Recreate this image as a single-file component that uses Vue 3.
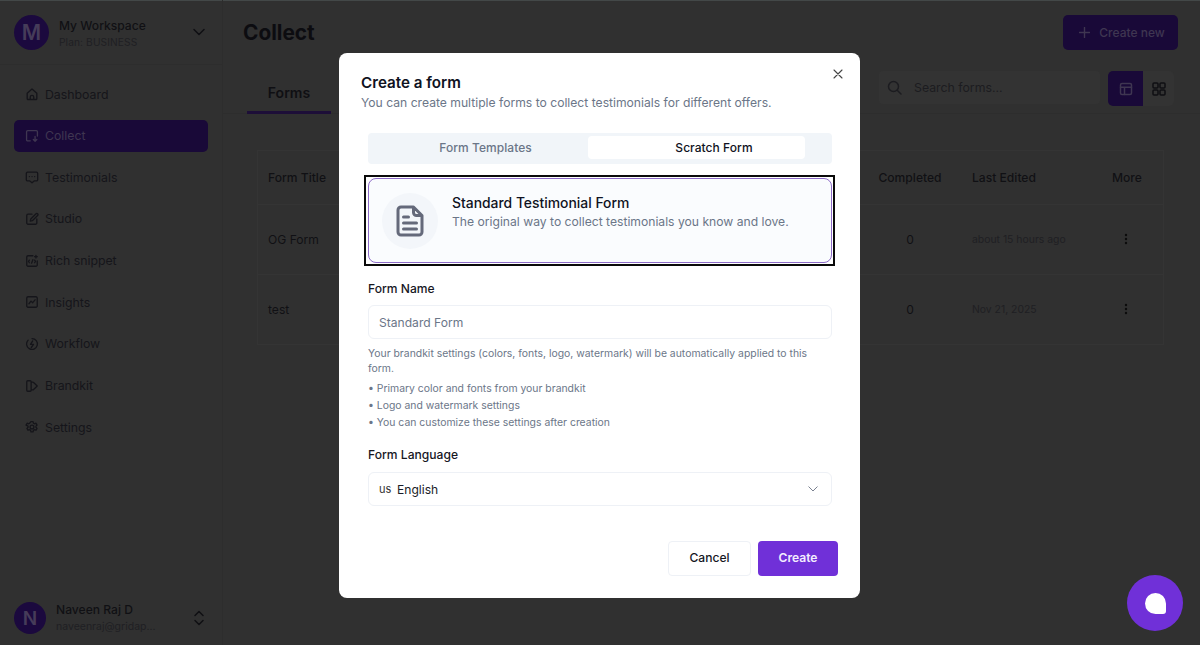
<script setup>
const nav = [
  { label: 'Dashboard', d: 'M2.5 7.2 8 2.2l5.500 5v6.100a1 1 0 0 1-1 1h-9a1 1 0 0 1-1-1zM6 14.200v-2.700a2 2 0 0 1 4 0v2.700' },
  { label: 'Collect', active: true, d: 'M6 13.500H3a1.200 1.200 0 0 1-1.200-1.200V3A1.200 1.200 0 0 1 3 1.800h10A1.200 1.200 0 0 1 14.200 3v5M11.500 8.500v5.500M9.500 12l2 2 2-2' },
  { label: 'Testimonials', d: 'M3 2.500h10a1.500 1.500 0 0 1 1.500 1.500v7a1.500 1.500 0 0 1-1.500 1.500h-2.500L8 14.700 5.500 12.500H3A1.500 1.500 0 0 1 1.500 11V4A1.500 1.500 0 0 1 3 2.500zM5 7.500h.1M8 7.500h.1M11 7.500h.1' },
  { label: 'Studio', d: 'M8 2.500H3.500A1.500 1.500 0 0 0 2 4v8.500A1.500 1.500 0 0 0 3.500 14H12a1.500 1.500 0 0 0 1.500-1.500V8M6 10.500l.6-2.400 6-6a1.200 1.200 0 0 1 1.800 1.800l-6 6z' },
  { label: 'Rich snippet', d: 'M9 2H3.500A1.500 1.500 0 0 0 2 3.500v9A1.500 1.500 0 0 0 3.500 14h9a1.500 1.500 0 0 0 1.500-1.500V8M5 7l-1 1.500L5 10M7.500 10.500l1.500-4M11 7l1 1.500L11 10M12.500 1.500v3M11 3h3' },
  { label: 'Insights', d: 'M3.500 2h9A1.500 1.500 0 0 1 14 3.500v9a1.500 1.500 0 0 1-1.500 1.500h-9A1.500 1.500 0 0 1 2 12.500v-9A1.500 1.500 0 0 1 3.500 2zM4.500 10l2.300-3 2 1.800L11.500 5.500' },
  { label: 'Workflow', d: 'M8 1.800a6.200 6.200 0 1 1-4.400 1.800M1.900 7.200a6.200 6.200 0 0 1 .5-1.700M8.800 4.500 6.300 8.500h3.400l-2.500 3.500' },
  { label: 'Brandkit', d: 'M2 3.200A1.200 1.200 0 0 1 3.200 2h2.600A1.200 1.200 0 0 1 7 3.200v9.600A1.200 1.200 0 0 1 5.800 14H3.200A1.200 1.200 0 0 1 2 12.800zM7 3.500h1.800a1.200 1.200 0 0 1 1 .6L14 8l-4.200 4a1.200 1.200 0 0 1-1 .5H7' },
  { label: 'Settings', d: 'M6.800 1.800h2.400l.4 1.800 1.300.7 1.700-.6 1.200 2.100-1.300 1.200v1.400l1.300 1.200-1.200 2.100-1.700-.6-1.300.7-.4 1.800H6.800l-.4-1.800-1.300-.7-1.700.6-1.200-2.100 1.300-1.200V7L1.200 5.800l1.200-2.100 1.700.6 1.300-.7zM8 5.800a2.200 2.200 0 1 0 0 4.400 2.200 2.200 0 0 0 0-4.400z' },
]
const rows = [
  { title: 'OG Form', edited: 'about 15 hours ago' },
  { title: 'test', edited: 'Nov 21, 2025' },
]
const bullets = [
  'Primary color and fonts from your brandkit',
  'Logo and watermark settings',
  'You can customize these settings after creation',
]
</script>

<template>
  <div class="page">
    <aside class="sidebar">
      <div class="workspace">
        <div class="avatar large">M</div>
        <div class="who">
          <div class="name">My Workspace</div>
          <div class="plan">Plan: BUSINESS</div>
        </div>
        <svg class="chev" width="14" height="14" viewBox="0 0 14 14"><path d="M2 4.500 7 9.500l5-5" /></svg>
      </div>
      <nav class="nav">
        <a v-for="item in nav" :key="item.label" class="nav-item" :class="{ active: item.active }">
          <svg width="14" height="14" viewBox="0 0 16 16"><path :d="item.d" /></svg>
          <span>{{ item.label }}</span>
        </a>
      </nav>
      <div class="user">
        <div class="avatar small">N</div>
        <div class="who">
          <div class="uname">Naveen Raj D</div>
          <div class="email">naveenraj@gridap...</div>
        </div>
        <svg class="chev" width="14" height="18" viewBox="0 0 14 18"><path d="M3 6.500 7 2.500l4 4M3 11.500l4 4 4-4" /></svg>
      </div>
    </aside>

    <main class="main">
      <header class="top">
        <h1>Collect</h1>
        <button class="create-new">
          <svg width="11" height="11" viewBox="0 0 12 12"><path d="M6 .5v11M.5 6h11" /></svg>
          Create new
        </button>
      </header>
      <div class="tabbar">
        <div class="tab">Forms</div>
        <div class="tools">
          <div class="search">
            <svg width="15" height="15" viewBox="0 0 15 15"><circle cx="6.500" cy="6.500" r="5" /><path d="m10.500 10.500 3.500 3.500" /></svg>
            <span>Search forms...</span>
          </div>
          <div class="views">
            <div class="view on">
              <svg width="14" height="14" viewBox="0 0 14 14"><rect x="1.500" y="1.500" width="11" height="11" rx="1.500" /><path d="M1.500 5.200h11M5.500 5.200v7.300" /></svg>
            </div>
            <div class="view">
              <svg width="14" height="14" viewBox="0 0 14 14"><rect x="1" y="1" width="5" height="5" rx="1" /><rect x="8" y="1" width="5" height="5" rx="1" /><rect x="1" y="8" width="5" height="5" rx="1" /><rect x="8" y="8" width="5" height="5" rx="1" /></svg>
            </div>
          </div>
        </div>
      </div>
      <section class="table">
        <div class="row head">
          <div class="c-title">Form Title</div>
          <div class="c-num">Completed</div>
          <div class="c-edit">Last Edited</div>
          <div class="c-more">More</div>
        </div>
        <div v-for="r in rows" :key="r.title" class="row body">
          <div class="c-title">{{ r.title }}</div>
          <div class="c-num">0</div>
          <div class="c-edit date">{{ r.edited }}</div>
          <div class="c-more">
            <svg width="4" height="12" viewBox="0 0 4 12" class="kebab"><circle cx="2" cy="2" r="1.200" /><circle cx="2" cy="6" r="1.200" /><circle cx="2" cy="10" r="1.200" /></svg>
          </div>
        </div>
      </section>
    </main>

    <div class="modal">
      <svg class="close" width="10" height="10" viewBox="0 0 10 10"><path d="m1 1 8 8M9 1 1 9" /></svg>
      <h2>Create a form</h2>
      <p class="sub">You can create multiple forms to collect testimonials for different offers.</p>
      <div class="content">
        <div class="switch">
          <div class="sw-item left">Form Templates</div>
          <div class="sw-item picked">Scratch Form</div>
        </div>
        <div class="card-focus">
          <div class="card">
            <div class="doc">
              <svg width="30" height="32" viewBox="0 0 30 32"><path d="M18.500 2H6a3 3 0 0 0-3 3v22a3 3 0 0 0 3 3h18a3 3 0 0 0 3-3V10.500zM18.500 2v5.500a3 3 0 0 0 3 3H27M8.500 12h5M8.500 18h13M8.500 24h13" /></svg>
            </div>
            <div class="card-text">
              <div class="card-title">Standard Testimonial Form</div>
              <div class="card-desc">The original way to collect testimonials you know and love.</div>
            </div>
          </div>
        </div>
        <label class="field-label first">Form Name</label>
        <div class="input name-input placeholder">Standard Form</div>
        <p class="help">Your brandkit settings (colors, fonts, logo, watermark) will be automatically applied to this form.</p>
        <ul class="bullets">
          <li v-for="b in bullets" :key="b">• {{ b }}</li>
        </ul>
        <label class="field-label second">Form Language</label>
        <div class="input select">
          <span class="flag">US</span>
          <span class="lang">English</span>
          <svg width="10" height="6" viewBox="0 0 10 6"><path d="m.8.8 4.200 4.200L9.200.8" /></svg>
        </div>
      </div>
      <div class="actions">
        <button class="cancel">Cancel</button>
        <button class="create">Create</button>
      </div>
    </div>

    <div class="bubble"><span></span></div>
  </div>
</template>

<style>
html, body { margin: 0; background: #303030; overflow: hidden; }
</style>

<style scoped>
* { box-sizing: border-box; }
.page {
  width: 1200px; height: 645px; position: relative; display: flex; overflow: hidden;
  background: #303030; color: #141419;
  font-family: Inter, "Liberation Sans", sans-serif;
  box-shadow: inset 0 1px 0 #434848;
}
svg { fill: none; stroke: currentColor; stroke-width: 1.500; stroke-linecap: round; stroke-linejoin: round; flex: none; }

.sidebar { width: 223px; height: 645px; flex: none; display: flex; flex-direction: column; border-right: 1px solid #2d2d2d; }
.workspace { height: 65px; flex: none; display: flex; align-items: center; padding: 0 16px 0 14px; border-bottom: 1px solid #2d2d2d; }
.avatar { border-radius: 50%; background: #1b093e; color: #463c59; display: flex; align-items: center; justify-content: center; font-weight: 600; flex: none; }
.avatar.large { width: 35px; height: 35px; font-size: 21px; }
.avatar.small { width: 32px; height: 32px; font-size: 19px; }
.who { flex: 1; min-width: 0; }
.workspace .who { margin-left: 10px; padding-top: 3px; }
.name { font-size: 12.100px; font-weight: 500; line-height: 16px; color: #101014; }
.plan { font-size: 10.200px; line-height: 16px; color: #1f1f23; letter-spacing: .1px; }
.chev { color: #0f0f13; }

.nav { padding: 13px 14px 0; display: flex; flex-direction: column; gap: 9.670px; }
.nav-item { height: 32px; width: 194px; border-radius: 5px; display: flex; align-items: center; gap: 6px; padding-left: 11px; font-size: 12.300px; color: #15151a; }
.nav-item.active { background: #190938; color: #3f3651; }

.user { margin-top: auto; height: 54px; flex: none; display: flex; align-items: center; padding: 0 16px 0 14px; }
.user .who { margin-left: 10px; }
.uname { font-size: 12.100px; font-weight: 500; line-height: 17px; color: #101014; }
.email { font-size: 10.500px; line-height: 17px; color: #1f1f23; }

.main { flex: 1; min-width: 0; height: 645px; }
.top { height: 65px; display: flex; align-items: center; justify-content: space-between; padding: 0 22px 0 20px; }
.top h1 { margin: 0 0 1px; font-size: 20.800px; font-weight: 700; color: #0c0c10; }
.create-new { width: 115px; height: 35px; border: 0; border-radius: 5px; background: #190938; color: #3f3651; font: 500 12px Inter, sans-serif; display: flex; align-items: center; justify-content: center; gap: 9px; padding: 0 0 0 3px; }

.tabbar { height: 49px; display: flex; justify-content: space-between; align-items: flex-start; border-bottom: 1px solid #2d2d2d; padding: 0 26px 0 24px; }
.tab { width: 84px; height: 49px; border-bottom: 3px solid #1d0e38; font-size: 14px; font-weight: 600; color: #0f0f13; text-align: center; line-height: 56px; }
.tools { display: flex; gap: 8px; margin-top: 6px; }
.search { width: 221px; height: 33px; background: #333333; border-radius: 4px; display: flex; align-items: center; gap: 12px; padding-left: 8px; font-size: 12.300px; color: #1c1c20; }
.views { display: flex; background: #333333; border-radius: 5px; }
.view { width: 31px; height: 35px; display: flex; align-items: center; justify-content: center; color: #0f0f13; }
.view.on { width: 35px; background: #190938; color: #3f3651; border-radius: 5px 0 0 5px; }

.table { margin: 36px 36px 0 34px; border: 1px solid #343434; }
.row { display: grid; grid-template-columns: 1fr 84px 149px 63px; align-items: center; font-size: 12.100px; color: #101014; }
.row.head { height: 54px; font-weight: 500; border-bottom: 1px solid #343434; }
.row.body { height: 69.500px; border-bottom: 1px solid #343434; }
.row.body:last-child { border-bottom: 0; }
.c-title { padding-left: 10px; }
.c-num { text-align: center; padding-left: 2px; }
.c-edit { padding-left: 21px; }
.c-more { padding-left: 12px; }
.row.body .c-more { padding-left: 24px; display: flex; }
.date { font-size: 10.400px; color: #1f1f23; }
.kebab { fill: #0c0c0c; stroke: none; }

.modal {
  position: absolute; left: 339px; top: 53px; width: 521px; height: 545px;
  background: #fff; border-radius: 8px; padding: 20px 22px 0; color: #0f1222;
}
.close { position: absolute; right: 17px; top: 16px; color: #444; stroke-width: 1.100; }
.modal h2 { margin: 0; font-size: 15.200px; line-height: 19px; font-weight: 600; color: #0f1222; }
.sub { margin: 2px 0 0; font-size: 12.150px; line-height: 18px; color: #6b7688; }
.content { padding: 0 6px 0 7px; margin-top: 21px; }
.switch { height: 31px; background: #f1f5f9; border-radius: 4px; display: flex; padding: 3px; font-size: 12px; }
.sw-item { flex: 0 0 217px; height: 23px; display: flex; align-items: center; justify-content: center; color: #6b7688; font-weight: 500; letter-spacing: .05px; }
.sw-item.left { padding-left: 12px; }
.sw-item.picked { background: #fff; border-radius: 4px; color: #0f1222; padding-left: 35px; }

.card-focus { margin-top: 14px; position: relative; }
.card-focus::before { content: ""; position: absolute; top: -3px; bottom: -3px; left: -4px; right: -3px; border: 2px solid #0a0a0a; pointer-events: none; }
.card {
  height: 85px; border: 1px solid #8d6cc8; border-radius: 8px; background: #fafcfe;
  display: flex; align-items: flex-start; padding: 14px 0 0 13px; gap: 14px;
}
.doc { width: 56px; height: 56px; border-radius: 50%; background: #f3f6fa; display: flex; align-items: center; justify-content: center; color: #64697a; flex: none; }
.doc svg { stroke-width: 3; }
.card-text { padding-top: 1px; }
.card-title { font-size: 13.900px; line-height: 19px; font-weight: 500; color: #0f1222; }
.card-desc { font-size: 12.150px; line-height: 18px; color: #6b7688; }

.field-label { display: block; font-size: 12.100px; line-height: 16px; font-weight: 500; color: #17171f; }
.first { margin-top: 18px; }
.second { margin-top: 16px; }
.input { height: 34px; margin-top: 9px; border: 1px solid #eef1f6; border-radius: 6px; display: flex; align-items: center; padding: 0 11px 0 10px; font-size: 12.100px; }
.name-input { margin-top: 8px; }
.placeholder { color: #6b7688; }
.help { margin: 7px 0 0; font-size: 10.420px; line-height: 15px; color: #6b7688; }
.bullets { margin: 4px 0 0; padding: 0; list-style: none; font-size: 10.420px; line-height: 17px; color: #6b7688; }
.select { color: #1a1c28; gap: 5px; }
.flag { font-size: 11px; color: #333; font-variant-caps: small-caps; text-transform: lowercase; width: 13px; }
.lang { flex: 1; }
.select svg { color: #7a8190; stroke-width: 1; margin-right: 2px; }

.actions { position: absolute; right: 22px; bottom: 22px; display: flex; gap: 7px; }
.actions button { height: 35px; border-radius: 4px; padding: 0 0 2px; font: 500 12.100px Inter, sans-serif; }
.cancel { width: 83px; background: #fff; border: 1px solid #eef1f6; color: #15171f; }
.create { width: 80px; background: #7030d8; border: 0; color: #f3edff; font-weight: 600 !important; }

.bubble { position: absolute; left: 1127px; top: 575px; width: 56px; height: 56px; border-radius: 50%; background: #7030d8; display: flex; align-items: center; justify-content: center; }
.bubble span { width: 21px; height: 21px; background: #fff; border-radius: 50% 50% 3px 50%; }
</style>
